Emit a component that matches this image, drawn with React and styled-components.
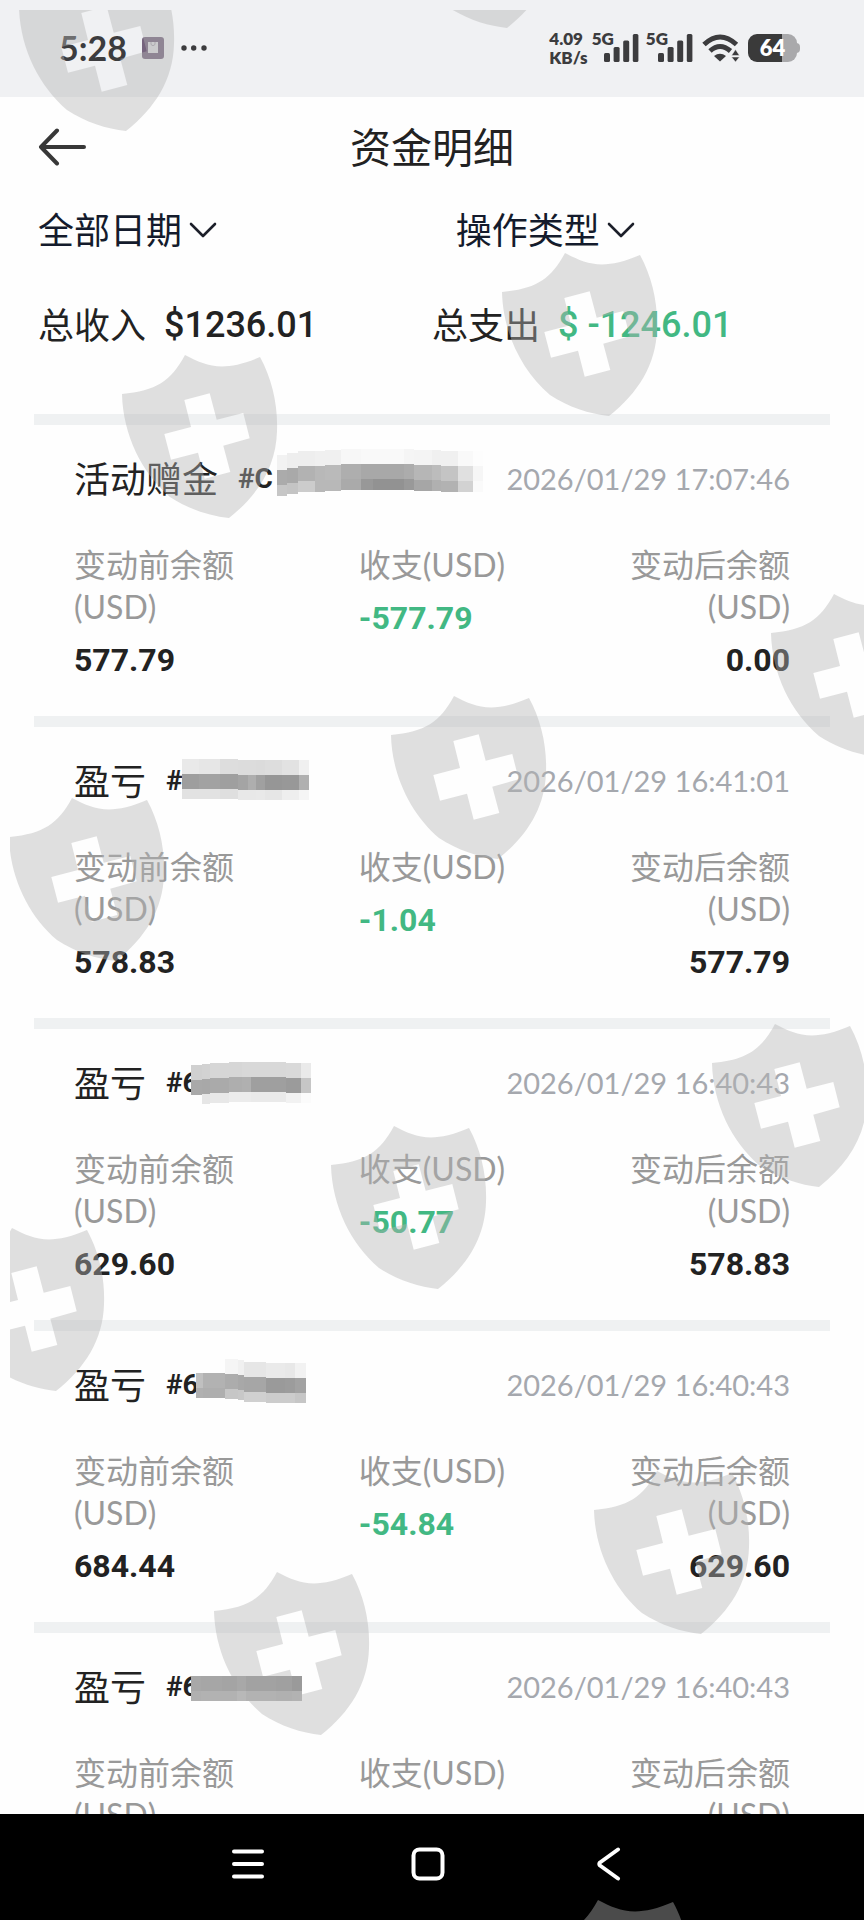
import React, { useState } from "react";
import styled, { createGlobalStyle } from "styled-components";

const records = [
    {
        type: "活动赠金",
        id: "#C",
        date: "2026/01/29 17:07:46",
        before: "577.79",
        change: "-577.79",
        after: "0.00",
        mask: {
            left: 203, top: -4, bands: [15, 15, 11],
            columns: [
                [0, 10, 6, "f2", "ab", "c6"], [10, 11, 4, "ee", "a9", "c4"], [21, 17, 2, "ee", "b2", "cc"],
                [38, 10, 2, "f0", "b8", "b8"], [48, 16, 1, "f0", "ba", "b8"], [64, 20, 0, "f7", "ae", "aa"],
                [84, 12, 0, "f9", "a8", "98"], [96, 31, 0, "f9", "a8", "92"], [127, 10, 0, "f5", "ac", "99"],
                [137, 18, 1, "f4", "b6", "a6"], [155, 9, 1, "f0", "bc", "b0"], [164, 17, 2, "f0", "c4", "b2"],
                [181, 15, 2, "f9", "e0", "d2"], [196, 10, 2, "fd", "f6", "fa"]
            ]
        }
    },
    {
        type: "盈亏",
        id: "#",
        date: "2026/01/29 16:41:01",
        before: "578.83",
        change: "-1.04",
        after: "577.79",
        mask: {
            left: 108, top: 4, bands: [15, 15, 10],
            columns: [
                [0, 17, 0, "e9", "9e", "e2"], [17, 21, 0, "e6", "a2", "e2"], [38, 18, 0, "dd", "9f", "df"],
                [56, 10, 1, "dc", "a4", "e8"], [66, 8, 1, "dc", "ae", "e8"], [74, 9, 1, "db", "a0", "e9"],
                [83, 17, 1, "dd", "96", "e6"], [100, 17, 1, "e2", "98", "ee"], [117, 10, 1, "f0", "b0", "f5"]
            ]
        }
    },
    {
        type: "盈亏",
        id: "#6",
        date: "2026/01/29 16:40:43",
        before: "629.60",
        change: "-50.77",
        after: "578.83",
        mask: {
            left: 117, top: 5, bands: [15, 15, 10],
            columns: [
                [0, 11, 3, "d0", "a9", null], [11, 8, 2, "d2", "a8", "e6"], [19, 19, 1, "d6", "aa", "e8"],
                [38, 13, 0, "d6", "ae", "ec"], [51, 9, 0, "d8", "b0", "ec"], [60, 35, 0, "d8", "9f", "ea"],
                [95, 15, 1, "d9", "9b", "f2"], [110, 10, 1, "ea", "c6", "fb"]
            ]
        }
    },
    {
        type: "盈亏",
        id: "#6",
        date: "2026/01/29 16:40:43",
        before: "684.44",
        change: "-54.84",
        after: "629.60",
        mask: {
            left: 122, top: 0, bands: [15, 15, 10],
            columns: [
                [0, 7, -1, null, "c0", "b0"], [7, 22, -1, null, "b2", "ae"], [29, 13, 0, "f5", "ac", "c6"],
                [42, 6, 1, "f0", "a8", "c8"], [48, 22, 3, "e6", "a6", "d0"], [70, 19, 4, "ea", "9a", "cc"],
                [89, 10, 4, "e8", "9c", "cc"], [99, 11, 4, "f2", "a2", "c6"]
            ]
        }
    },
    {
        type: "盈亏",
        id: "#6",
        date: "2026/01/29 16:40:43",
        mask: {
            left: 117, top: 15, bands: [15, 10, 0],
            columns: [
                [0, 10, 0, "a8", "b0", null], [10, 21, 0, "a6", "b2", null], [31, 15, 0, "a4", "b2", null],
                [46, 9, 0, "a8", "b8", null], [55, 30, 0, "a2", "b2", null], [85, 16, 0, "a0", "b0", null],
                [101, 10, 0, "9a", "b2", null]
            ]
        }
    }
];

const shields = [
    [19, -32], [400, -135], [122, 355], [502, 253], [9, 798], [391, 696], [771, 594],
    [-51, 1228], [331, 1126], [712, 1024], [214, 1572], [594, 1471], [535, 1900]
];

const Mask = ({ mask }) => {
    const [first, second, third] = mask.bands;
    const rows = [[0, first], [first, second], [first + second, third]];
    return (
        <MaskSvg $left={mask.left} $top={mask.top} width="210" height="50" shapeRendering="crispEdges" aria-hidden="true">
            {mask.columns.map(([x, width, y, ...shades]) =>
                shades.map((shade, i) => shade && (
                    <rect key={`${x}-${i}`} x={x} y={y + rows[i][0]} width={width} height={rows[i][1]} fill={`#${shade}${shade}${shade}`} />
                ))
            )}
        </MaskSvg>
    );
};

const Signal = () => (
    <SignalBox>
        <SmallText>5G</SmallText>
        <SignalBars width="35" height="28" viewBox="0 0 35 28" fill="#3c3c3e" aria-hidden="true">
            <rect x="0" y="19" width="6" height="9" rx="1.5" />
            <rect x="9.6" y="13" width="6" height="15" rx="1.5" />
            <rect x="19.2" y="6.5" width="6" height="21.5" rx="1.5" />
            <rect x="28.8" y="0" width="5.6" height="28" rx="1.5" />
        </SignalBars>
    </SignalBox>
);

const Shield = ({ x, y }) => (
    <ShieldSvg $x={x} $y={y} width="156" height="163" viewBox="0 0 156 163" aria-hidden="true">
        <path
            fill="#b4b4b4"
            fillRule="evenodd"
            d="M0 39C34 36 49 26 63 0C84 11 101 18 138 2C150 24 156 50 155 76C154 112 136 140 107 163C88 161 66 154 48 142C20 118 1 80 0 39ZM62.3 45L69 72L42.3 79L49 104.7L76 97.7L82.7 123.7L108.3 117L101.3 90.7L127.7 83.3L121.3 58L94.7 64.7L87.7 38.3Z"
        />
    </ShieldSvg>
);

const Chevron = () => (
    <ChevronSvg width="28" height="18" viewBox="0 0 28 18" aria-hidden="true">
        <path d="M2 3L14 15L26 3" fill="none" stroke="#1c1f2a" strokeWidth="2.6" strokeLinecap="round" strokeLinejoin="round" />
    </ChevronSvg>
);

const Record = ({ record }) => (
    <RecordItem>
        <RecordHeader>
            <RecordType>{record.type}</RecordType>
            <RecordId>{record.id}</RecordId>
            <RecordDate>{record.date}</RecordDate>
            <Mask mask={record.mask} />
        </RecordHeader>
        <Amounts>
            <Side>
                <AmountLabel>变动前余额(USD)</AmountLabel>
                {record.before && <Amount>{record.before}</Amount>}
            </Side>
            <div>
                <AmountLabel>收支(USD)</AmountLabel>
                {record.change && <Amount $color="#42b883">{record.change}</Amount>}
            </div>
            <Side $align="right">
                <AmountLabel>变动后余额(USD)</AmountLabel>
                {record.after && <Amount>{record.after}</Amount>}
            </Side>
        </Amounts>
    </RecordItem>
);

const App = () => {
    const [date, setDate] = useState("all");
    const [type, setType] = useState("type");

    return <>
        <GlobalStyle />
        <Page>
            <StatusBar>
                <Time>5:28</Time>
                <svg width="22" height="22" viewBox="0 0 22 22" aria-hidden="true">
                    <rect width="22" height="22" rx="3" fill="#76647e" />
                    <rect x="6" y="5" width="10" height="11" fill="#dcdce0" />
                    <path d="M9 5V7.5Q11 10 13 7.5V5" fill="none" stroke="#a9a4ad" />
                </svg>
                <Dots width="26" height="6" viewBox="0 0 26 6" fill="#3c3c3e" aria-hidden="true">
                    <circle cx="3" cy="3" r="2.7" />
                    <circle cx="12.7" cy="3" r="2.7" />
                    <circle cx="23" cy="3" r="2.7" />
                </Dots>
                <Speed>
                    <SmallText>4.09</SmallText>
                    <SmallText>KB/s</SmallText>
                </Speed>
                <Signal />
                <Signal />
                <Wifi width="38" height="28" viewBox="0 0 38 28" aria-hidden="true">
                    <path d="M2 10.5Q18 -4.5 34.500 10.500" fill="none" stroke="#3c3c3e" strokeWidth="5" />
                    <path d="M8 17Q18 8 28.500 17" fill="none" stroke="#3c3c3e" strokeWidth="5" />
                    <path d="M12 22Q18 17.500 24 22L18 27.500Z" fill="#3c3c3e" />
                    <path d="M29.500 21.500L33.500 15.500L37.500 21.500ZM29.500 23L33.500 28L37.500 23Z" fill="#3c3c3e" stroke="#f0f1f3" strokeWidth="0.5" />
                </Wifi>
                <Battery>
                    <BatteryLevel>64</BatteryLevel>
                </Battery>
            </StatusBar>

            <Header>
                <BackButton aria-label="返回">
                    <svg width="50" height="38" viewBox="0 0 50 38" fill="none" stroke="#383838" strokeWidth="4" strokeLinecap="round" strokeLinejoin="round" aria-hidden="true">
                        <path d="M46 19H3M19 2.500L3 19L19 35.500" />
                    </svg>
                </BackButton>
                <Title>资金明细</Title>
            </Header>

            <Filters>
                <Filter>
                    <Select aria-label="全部日期" value={date} onChange={e => setDate(e.target.value)}>
                        <option value="all">全部日期</option>
                    </Select>
                    <Chevron />
                </Filter>
                <Filter>
                    <Select aria-label="操作类型" value={type} onChange={e => setType(e.target.value)}>
                        <option value="type">操作类型</option>
                    </Select>
                    <Chevron />
                </Filter>
            </Filters>

            <Summary>
                <Total>总收入<TotalAmount>$1236.01</TotalAmount></Total>
                <Total>总支出<TotalAmount $color="#42b883">$ -1246.01</TotalAmount></Total>
            </Summary>

            <RecordList>
                {records.map((record, i) => <Record key={i} record={record} />)}
            </RecordList>

            <NavBar>
                <NavButton aria-label="菜单">
                    <svg width="34" height="34" viewBox="0 0 34 34" stroke="#fff" strokeWidth="4" strokeLinecap="round" aria-hidden="true">
                        <path d="M3 4.500H31M3 17H31M3 29.500H31" />
                    </svg>
                </NavButton>
                <NavButton aria-label="主页">
                    <svg width="34" height="34" viewBox="0 0 34 34" fill="none" stroke="#fff" strokeWidth="4" aria-hidden="true">
                        <rect x="2.500" y="2.500" width="29" height="29" rx="6" />
                    </svg>
                </NavButton>
                <NavButton aria-label="后退">
                    <svg width="34" height="34" viewBox="0 0 34 34" fill="none" stroke="#fff" strokeWidth="4" strokeLinecap="round" strokeLinejoin="round" aria-hidden="true">
                        <path d="M27 2.500L9 15.500Q7.500 17 9 18.500L27 31.500" />
                    </svg>
                </NavButton>
            </NavBar>

            <Watermark>
                {shields.map(([x, y]) => <Shield key={`${x}-${y}`} x={x - 10} y={y - 10} />)}
            </Watermark>
        </Page>
    </>
}

const GlobalStyle = createGlobalStyle`
    *, *::before, *::after {
        box-sizing: border-box;
    }

    body {
        margin: 0;
        background: #fefefe;
        color: #222;
        font-family: Lato, "Noto Sans CJK SC", sans-serif;
    }

    button, select {
        padding: 0;
        border: 0;
        background: none;
        color: inherit;
        font-family: inherit;
    }

    svg {
        display: block;
        flex-shrink: 0;
    }
`

const Page = styled.div`
    position: relative;
    display: flex;
    flex-direction: column;
    height: 100vh;
    overflow: hidden;
`

const StatusBar = styled.div`
    display: flex;
    align-items: center;
    flex-shrink: 0;
    height: 97px;
    padding: 0 64px 2px 59px;
    background: #f0f1f3;
    color: #3c3c3e;
`

const Time = styled.div`
    width: 83px;
    font-size: 34px;
    font-weight: 700;
`

const Dots = styled.svg`
    margin-left: 17px;
`

const Speed = styled.div`
    display: flex;
    flex-direction: column;
    margin-left: auto;
    margin-right: 4px;
`

const SmallText = styled.span`
    font-size: 17px;
    line-height: 19px;
    font-weight: 800;
`

const SignalBox = styled.div`
    display: flex;
    align-items: flex-start;
    height: 38px;
    margin-right: 7px;
`

const SignalBars = styled.svg`
    margin-top: 5px;
    margin-left: -10px;
`

const Wifi = styled.svg`
    margin-left: 2px;
    margin-right: 8px;
`

const Battery = styled.div`
    position: relative;
    width: 49px;
    height: 28px;
    margin-right: 3px;
    border-radius: 9px;
    background: linear-gradient(to right, #3a3a3a 69%, #a9a9ab 69%);

    &::after {
        content: "";
        position: absolute;
        top: 9px;
        right: -3px;
        width: 4px;
        height: 10px;
        border-radius: 0 4px 4px 0;
        background: #a9a9ab;
    }
`

const BatteryLevel = styled.div`
    color: #fff;
    font-size: 22px;
    line-height: 28px;
    font-weight: 800;
    text-align: center;
`

const Header = styled.header`
    display: grid;
    grid-template-columns: 50px 1fr 50px;
    align-items: center;
    flex-shrink: 0;
    height: 100px;
    padding: 0 38px;
`

const BackButton = styled.button`
    cursor: pointer;
`

const Title = styled.h1`
    margin: 0;
    padding-top: 2px;
    font-size: 41px;
    line-height: 52px;
    font-weight: 400;
    text-align: center;
`

const Filters = styled.div`
    display: grid;
    grid-template-columns: 53% 47%;
    align-items: center;
    flex-shrink: 0;
    height: 66px;
    padding: 0 38px;
    color: #141b2c;
`

const Filter = styled.div`
    display: flex;
    align-items: center;
`

const Select = styled.select`
    appearance: none;
    font-size: 36px;
    line-height: 52px;
`

const ChevronSvg = styled.svg`
    margin-left: 6px;
    pointer-events: none;
`

const Summary = styled.div`
    display: grid;
    grid-template-columns: 1fr 1fr;
    flex-shrink: 0;
    padding: 36px 38px 63px;
`

const Total = styled.div`
    display: flex;
    align-items: center;
    font-size: 36px;
    line-height: 52px;
`

const TotalAmount = styled.span`
    margin-left: 18px;
    color: ${props => props.$color || "#222"};
    font-family: Roboto, sans-serif;
    font-weight: 500;
`

const RecordList = styled.main`
    flex: 1;
    min-height: 0;
    padding: 0 34px;
    overflow: hidden;
`

const RecordItem = styled.section`
    padding: 28px 40px 34px;
    border-top: 11px solid #eff1f2;
`

const RecordHeader = styled.div`
    position: relative;
    display: flex;
    align-items: center;
    height: 52px;
    line-height: 50px;
`

const RecordType = styled.span`
    font-size: 36px;
`

const RecordId = styled.span`
    margin-left: 20px;
    font-family: Roboto, sans-serif;
    font-size: 28px;
    font-weight: 700;
`

const RecordDate = styled.time`
    margin-left: auto;
    color: #a5a8ae;
    font-size: 29px;
`

const MaskSvg = styled.svg`
    position: absolute;
    z-index: 2;
    left: ${props => props.$left}px;
    top: ${props => props.$top}px;
`

const Amounts = styled.div`
    display: flex;
    justify-content: space-between;
    margin-top: 39px;
`

const Side = styled.div`
    width: 30%;
    text-align: ${props => props.$align || "left"};
`

const AmountLabel = styled.div`
    color: #999;
    font-size: 32px;
    line-height: 42px;
`

const Amount = styled.div`
    margin-top: 11px;
    color: ${props => props.$color || "#222"};
    font-family: Roboto, sans-serif;
    font-size: 32px;
    line-height: 43px;
    font-weight: 700;
`

const NavBar = styled.nav`
    display: flex;
    align-items: center;
    justify-content: center;
    gap: 120px;
    flex-shrink: 0;
    height: 106px;
    padding: 0 8px 6px 0;
    background: #000;
`

const NavButton = styled.button`
    display: flex;
    justify-content: center;
    width: 60px;
    cursor: pointer;
`

const Watermark = styled.div`
    position: absolute;
    z-index: 1;
    inset: 10px 0 0 10px;
    overflow: hidden;
    pointer-events: none;
`

const ShieldSvg = styled.svg`
    position: absolute;
    left: ${props => props.$x}px;
    top: ${props => props.$y}px;
    opacity: 0.415;
`

export default App;
